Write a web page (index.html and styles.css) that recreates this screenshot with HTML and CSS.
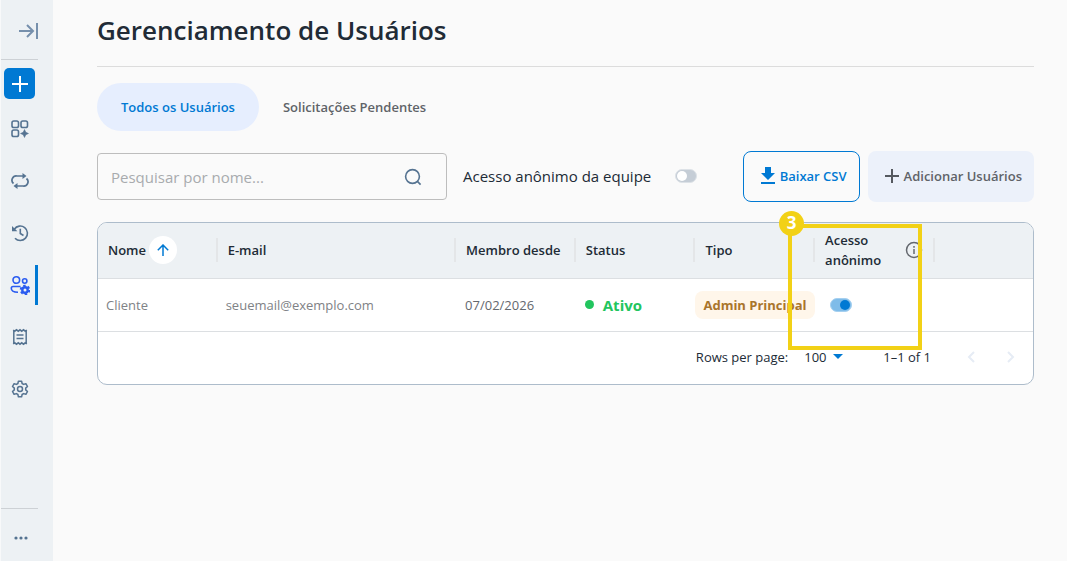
FILE: index.html
```html
<!DOCTYPE html>
<html lang="pt-BR">

<head>
    <meta charset="UTF-8">
    <title>Gerenciamento de Usuários</title>
    <meta name="viewport" content="width=device-width, initial-scale=1.0">
    <link rel="stylesheet" href="styles.css">
</head>

<body>
    <nav class="sidebar" aria-label="Menu">
        <button type="button" class="expand-btn" aria-label="Expandir menu">
            <svg width="22" height="20" viewBox="0 0 22 20"><path d="M1 10h14M9 4l6 6-6 6M19 2v16" fill="none" stroke="#7690ac" stroke-width="2"/></svg>
        </button>
        <button type="button" class="add-btn" aria-label="Novo">
            <svg width="16" height="16" viewBox="0 0 16 16"><path d="M8 0v16M0 8h16" stroke="#fff" stroke-width="2"/></svg>
        </button>
        <div class="nav-links">
            <a href="#" class="nav-link" aria-label="Aplicativos">
                <svg width="20" height="20" viewBox="0 0 20 20" fill="none" stroke="#557391" stroke-width="1.600"><rect x="2" y="2" width="6.500" height="6.500" rx="1.800"/><rect x="11" y="2" width="6.500" height="6.500" rx="1.800"/><rect x="2" y="11" width="6.500" height="6.500" rx="1.800"/><path d="M14.500 10.500l1.300 2.700 2.700 1.300-2.700 1.300-1.300 2.700-1.300-2.700-2.700-1.300 2.700-1.300z" fill="#557391" stroke="#557391" stroke-width=".5"/></svg>
            </a>
            <a href="#" class="nav-link" aria-label="Fluxos">
                <svg width="20" height="20" viewBox="0 0 20 20" fill="none" stroke="#557391" stroke-width="1.700"><path d="M14 5H7a4.300 4.300 0 0 0-3.500 7.500M6 15h7a4.300 4.300 0 0 0 3.500-7.500"/><path d="M12.500 2v6l4-3zM7.500 12v6l-4-3z" fill="#557391" stroke="none"/></svg>
            </a>
            <a href="#" class="nav-link" aria-label="Histórico">
                <svg width="20" height="20" viewBox="0 0 20 20" fill="none" stroke="#557391" stroke-width="1.600"><path d="M4.300 6.200A7.200 7.200 0 1 1 5 15.200M10.300 5.800V10.500l3.200 2"/><path d="M2 3v5.200h5.400z" fill="#557391" stroke="none"/></svg>
            </a>
            <a href="#" class="nav-link active" aria-label="Usuários">
                <svg width="20" height="20" viewBox="0 0 20 20" fill="none" stroke="#2a5bf0" stroke-width="1.600"><circle cx="6.300" cy="5" r="3.300"/><circle cx="14.700" cy="6" r="2.200"/><path d="M10.500 11.500H3a1.700 1.700 0 0 0-1.700 1.700c0 2.600 2.500 4 6.700 4"/><circle cx="15" cy="15" r="2.700" stroke-width="2.400"/><circle cx="15" cy="15" r="4.300" stroke-width="2" stroke-dasharray="2.400 2.100"/></svg>
            </a>
            <a href="#" class="nav-link" aria-label="Faturas">
                <svg width="20" height="20" viewBox="0 0 20 20" fill="none" stroke="#557391" stroke-width="1.500"><path d="M3.800 3.200v13.600M16.200 3.200v13.600M6.500 8h7M6.500 11.500h7"/><path d="M3.200 3l1.500 1.200 1.800-1.400 1.800 1.400 1.700-1.400 1.700 1.400 1.800-1.400 1.800 1.400L16.800 3M3.200 17l1.500-1.200 1.800 1.400 1.800-1.400 1.700 1.400 1.700-1.400 1.800 1.400 1.800-1.400 1.500 1.200"/></svg>
            </a>
            <a href="#" class="nav-link" aria-label="Configurações">
                <svg width="20" height="20" viewBox="0 0 20 20" fill="none" stroke="#557391" stroke-width="1.500" stroke-linejoin="round"><path d="M8.400 2.200h3.200l.5 2.300 1.500.9 2.300-.7 1.600 2.800-1.800 1.600v1.800l1.800 1.600-1.600 2.800-2.300-.7-1.500.9-.5 2.300H8.400l-.5-2.300-1.500-.9-2.300.7-1.600-2.800 1.800-1.600V9.100L2.500 7.500l1.600-2.800 2.300.7 1.500-.9z"/><circle cx="10" cy="10" r="2.500"/></svg>
            </a>
        </div>
        <button type="button" class="more-btn" aria-label="Mais">
            <svg width="16" height="4" viewBox="0 0 16 4" fill="#557391"><circle cx="3" cy="2" r="1.600"/><circle cx="8" cy="2" r="1.600"/><circle cx="13" cy="2" r="1.600"/></svg>
        </button>
    </nav>

    <main class="content">
        <h1>Gerenciamento de Usuários</h1>

        <div class="tabs">
            <button type="button" class="tab selected">Todos os Usuários</button>
            <button type="button" class="tab">Solicitações Pendentes</button>
        </div>

        <div class="toolbar">
            <div class="search">
                <input type="text" placeholder="Pesquisar por nome..." aria-label="Pesquisar por nome">
                <svg width="18" height="18" viewBox="0 0 18 18" fill="none" stroke="#557391" stroke-width="1.600"><circle cx="8.500" cy="8.500" r="6.900"/><path d="M13.400 13.400l3.200 3.200"/></svg>
            </div>
            <label class="team-access">
                Acesso anônimo da equipe
                <input type="checkbox" class="switch">
            </label>
            <div class="actions">
                <button type="button" class="btn btn-outline">
                    <svg width="14" height="18" viewBox="0 0 14 18"><path d="M4 0h6v6h4l-7 7-7-7h4zM0 15h14v2H0z" fill="#0079d3"/></svg>
                    Baixar CSV
                </button>
                <button type="button" class="btn btn-soft">
                    <svg width="14" height="14" viewBox="0 0 14 14"><path d="M7 0v14M0 7h14" stroke="#55595f" stroke-width="2"/></svg>
                    Adicionar Usuários
                </button>
            </div>
        </div>

        <div class="table-area">
            <div class="table-card">
                <table>
                    <thead>
                        <tr>
                            <th class="col">
                                <div class="head-cell">Nome
                                    <span class="sort">
                                        <svg width="12" height="12" viewBox="0 0 12 12"><path d="M6 12V1M.8 6.200L6 1l5.200 5.200" fill="none" stroke="#0079d3" stroke-width="1.500"/></svg>
                                    </span>
                                </div>
                            </th>
                            <th class="col-wide"><div class="head-cell">E-mail</div></th>
                            <th class="col"><div class="head-cell">Membro desde</div></th>
                            <th class="col"><div class="head-cell">Status</div></th>
                            <th class="col"><div class="head-cell">Tipo</div></th>
                            <th class="col">
                                <div class="head-cell">Acesso<br>anônimo
                                    <svg class="info" width="18" height="18" viewBox="0 0 18 18" fill="none" stroke="#64686e" stroke-width="1.500"><circle cx="9" cy="9" r="7.500"/><path d="M9 8v5M9 5v1.700"/></svg>
                                </div>
                            </th>
                            <th></th>
                        </tr>
                    </thead>
                    <tbody>
                        <tr>
                            <td class="muted">Cliente</td>
                            <td class="muted">seuemail@exemplo.com</td>
                            <td>07/02/2026</td>
                            <td><span class="status">Ativo</span></td>
                            <td class="type"><span class="role">Admin Principal</span></td>
                            <td class="access"><input type="checkbox" class="switch" aria-label="Acesso anônimo" checked></td>
                            <td></td>
                        </tr>
                    </tbody>
                </table>
                <div class="pagination">
                    <label for="rows">Rows per page:</label>
                    <div class="rows">
                        <select id="rows">
                            <option>100</option>
                        </select>
                        <svg width="10" height="5" viewBox="0 0 10 5"><path d="M0 0h10L5 5z" fill="#0079d3"/></svg>
                    </div>
                    <span class="range">1–1 of 1</span>
                    <button type="button" class="page-btn" aria-label="Anterior" disabled>
                        <svg width="8" height="12" viewBox="0 0 8 12"><path d="M7 1L2 6l5 5" fill="none" stroke="#e6ecf5" stroke-width="2"/></svg>
                    </button>
                    <button type="button" class="page-btn" aria-label="Próxima" disabled>
                        <svg width="8" height="12" viewBox="0 0 8 12"><path d="M1 1l5 5-5 5" fill="none" stroke="#e6ecf5" stroke-width="2"/></svg>
                    </button>
                </div>
            </div>
            <div class="callout"><span class="callout-number">3</span></div>
        </div>
    </main>
</body>

</html>
```

FILE: styles.css
```css
* {
    box-sizing: border-box;
}

body {
    margin: 0;
    min-height: 100vh;
    display: flex;
    font-family: 'Segoe UI', 'Open Sans', 'Noto Sans', sans-serif;
    font-size: 13px;
    color: #212b36;
    background-color: #fafafa;
}

button,
input,
select {
    font-family: inherit;
    margin: 0;
}

button {
    padding: 0;
    border: none;
    background: none;
    cursor: pointer;
}

svg {
    display: block;
    flex-shrink: 0;
}

/* sidebar */
.sidebar {
    width: 53px;
    flex-shrink: 0;
    display: flex;
    flex-direction: column;
    align-items: flex-start;
    background: #edf1f4;
    border-left: 1px solid #f8f9fa;
}

.expand-btn {
    width: 37px;
    height: 60px;
    padding: 3px 0 0 17px;
    border-bottom: 1px solid #cdd1d5;
}

.add-btn {
    width: 31px;
    height: 31px;
    margin: 8px 3px 10px;
    display: flex;
    align-items: center;
    justify-content: center;
    border-radius: 5px;
    background: #0079d3;
}

.nav-links {
    display: flex;
    flex-direction: column;
    gap: 12px;
}

.nav-link {
    width: 37px;
    height: 40px;
    padding-left: 9px;
    display: flex;
    align-items: center;
}

.nav-link.active {
    border-right: 3px solid #0079d3;
}

.more-btn {
    width: 37px;
    height: 53px;
    margin-top: auto;
    padding: 6px 0 0 12px;
    border-top: 1px solid #cdd1d5;
}

/* main area */
.content {
    flex: 1;
    min-width: 0;
    padding: 0 33px 32px 44px;
}

h1 {
    margin: 0 0 16px;
    height: 67px;
    padding-top: 12px;
    font-size: 26px;
    line-height: 36px;
    font-weight: 600;
    border-bottom: 1px solid #dcdcdc;
}

.tabs {
    display: flex;
    margin-bottom: 20px;
}

.tab {
    height: 48px;
    padding: 0 24px;
    font-size: 13px;
    font-weight: 600;
    color: #5f6368;
    border-radius: 24px;
}

.tab.selected {
    color: #0079d3;
    background: #e6eefe;
}

.toolbar {
    display: flex;
    align-items: center;
    margin-bottom: 20px;
}

.search {
    width: 350px;
    height: 47px;
    display: flex;
    align-items: center;
    padding: 0 24px 0 13px;
    border: 1px solid #bdbdbd;
    border-radius: 4px;
}

.search input {
    flex: 1;
    min-width: 0;
    padding: 0;
    border: none;
    outline: none;
    background: none;
    font-size: 15px;
    color: #212b36;
}

.search input::placeholder {
    color: #a8abae;
}

.team-access {
    display: flex;
    align-items: center;
    gap: 24px;
    margin-left: 16px;
    padding-bottom: 2px;
    font-size: 15px;
}

.switch {
    appearance: none;
    width: 22px;
    height: 14px;
    padding: 2px;
    display: flex;
    border-radius: 7px;
    background: #c5cdd6;
    border: 1px solid #dde2e7;
    cursor: pointer;
}

.switch::before {
    content: "";
    width: 10px;
    height: 10px;
    margin: -1px;
    border-radius: 50%;
    background: #fff;
}

.switch:checked {
    justify-content: flex-end;
    background: #7fbce9;
    border-color: #a5d0f0;
}

.switch:checked::before {
    background: #0079d3;
}

.actions {
    display: flex;
    gap: 8px;
    margin-left: auto;
}

.btn {
    height: 51px;
    display: flex;
    align-items: center;
    gap: 5px;
    padding: 0 12px 2px 17px;
    font-size: 13px;
    font-weight: 600;
    border-radius: 8px;
}

.btn-outline {
    color: #0079d3;
    border: 1px solid #0079d3;
}

.btn-soft {
    color: #5f6368;
    background: #ecf1fa;
}

/* users table */
.table-area {
    position: relative;
}

.table-card {
    overflow: hidden;
    border: 1px solid #adbccb;
    border-radius: 10px;
    background: #fff;
}

table {
    width: 100%;
    table-layout: fixed;
    border-collapse: collapse;
}

.col {
    width: 12.8%;
}

.col-wide {
    width: 25.5%;
}

th {
    height: 55px;
    padding: 0;
    font-weight: 600;
    line-height: 20px;
    text-align: left;
    background: #edf1f4;
    border-bottom: 1px solid #dcdfe2;
}

.head-cell {
    height: 24px;
    display: flex;
    align-items: center;
    padding-left: 10px;
    border-right: 2px solid #e4e6e8;
    white-space: nowrap;
}

.sort {
    width: 28px;
    height: 28px;
    margin-left: 3px;
    display: flex;
    align-items: center;
    justify-content: center;
    border-radius: 50%;
    background: #fff;
}

.info {
    margin-left: auto;
    margin-right: 10px;
}

td {
    height: 53px;
    padding: 0 0 0 9px;
    color: #64686e;
    white-space: nowrap;
    border-bottom: 1px solid #dcdfe2;
}

.muted {
    padding-left: 8px;
    color: #808286;
}

.status {
    display: flex;
    align-items: center;
    gap: 9px;
    font-size: 15px;
    font-weight: 700;
    color: #22c55e;
}

.status::before {
    content: "";
    width: 9px;
    height: 9px;
    border-radius: 50%;
    background: #22c55e;
}

.type {
    padding-left: 0;
}

.role {
    display: inline-block;
    padding: 0 8px;
    line-height: 28px;
    font-weight: 700;
    color: #a9752c;
    background: #fff6ea;
    border-radius: 8px;
}

.access {
    padding-left: 15px;
}

.pagination {
    height: 52px;
    display: flex;
    align-items: center;
    justify-content: flex-end;
    padding: 0 2px 2px 0;
}

.rows {
    display: flex;
    align-items: center;
    gap: 6px;
    margin: 0 40px 0 16px;
}

.rows select {
    appearance: none;
    padding: 0;
    border: none;
    background: none;
    font-size: 13px;
    color: #212b36;
}

.range {
    margin-right: 20px;
}

.page-btn {
    width: 40px;
    height: 40px;
    display: flex;
    align-items: center;
    justify-content: center;
}

/* numbered frame over the access column */
.callout {
    position: absolute;
    top: 2px;
    right: 112px;
    width: 134px;
    height: 126px;
    border: 4px solid #f2d116;
    pointer-events: none;
}

.callout-number {
    position: absolute;
    top: -17px;
    left: -13px;
    width: 25px;
    height: 25px;
    font-size: 17px;
    line-height: 24px;
    font-weight: 700;
    text-align: center;
    color: #fff;
    background: #f2d116;
    border-radius: 50%;
}
```
